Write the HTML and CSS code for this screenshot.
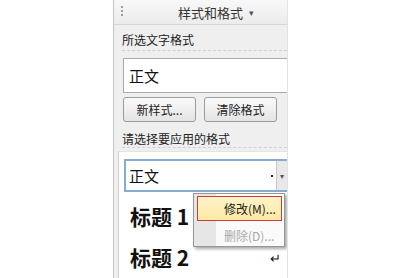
FILE: index.html
```html
<!DOCTYPE html>
<html lang="zh-CN">
<head>
    <meta charset="UTF-8">
    <title>样式和格式</title>
    <link rel="stylesheet" href="styles.css">
</head>
<body>
    <div class="page">
        <div class="gap"></div>
        <div class="panel">
            <div class="title">
                <span class="grip"></span>
                <span class="title-text">样式和格式</span>
                <span class="title-arrow">▾</span>
            </div>
            <div class="label">所选文字格式</div>
            <div class="rule"></div>
            <div class="current">正文</div>
            <div class="buttons">
                <button class="btn">新样式...</button>
                <button class="btn">清除格式</button>
            </div>
            <div class="label label-2">请选择要应用的格式</div>
            <div class="rule"></div>
            <div class="list">
                <div class="combo">
                    <span class="combo-text">正文</span>
                    <span class="combo-dot"></span>
                    <span class="combo-btn">▾</span>
                </div>
                <div class="style-item h1">标题 1</div>
                <div class="style-item h2">标题 2<span class="ret">↵</span></div>

                <div class="menu">
                    <div class="menu-item active">修改(M)...</div>
                    <div class="menu-item disabled">删除(D)...</div>
                </div>
            </div>
        </div>
    </div>
</body>
</html>
```

FILE: styles.css
```css
body {
    margin: 0;
    background: #fff;
    font-family: "Noto Sans CJK SC", "Noto Sans", sans-serif;
}

.page {
    display: flex;
    width: 400px;
    height: 278px;
    overflow: hidden;
}

.gap {
    width: 113px;
    flex: none;
}

.panel {
    width: 173px;
    flex: none;
    background: #efefef;
    border-left: 1px solid #c4c4c4;
    border-right: 1px solid #e2e2e2;
    overflow: hidden;
    position: relative;
}

.title {
    height: 25px;
    display: flex;
    align-items: center;
    background: linear-gradient(#f8f8f8, #ececec);
    border-bottom: 1px solid #d6d6d6;
    box-sizing: border-box;
    font-size: 13px;
    color: #333;
}

.grip {
    width: 2px;
    height: 12px;
    margin-left: 7px;
    background: repeating-linear-gradient(#9a9a9a 0 2px, transparent 2px 4px);
}

.title-text {
    margin-left: 55px;
}

.title-arrow {
    margin-left: 6px;
    font-size: 9px;
    color: #555;
}

.label {
    font-size: 12px;
    color: #222;
    padding: 7px 0 0 8px;
    height: 16px;
    line-height: 16px;
}

.label-2 {
    padding-top: 9px;
    height: 14px;
}

.rule {
    margin: 2px 0 0 8px;
    border-top: 1px dashed #cfcfcf;
}

.current {
    margin: 7px 0 0 9px;
    width: 180px;
    height: 33px;
    line-height: 33px;
    background: #fff;
    border: 1px solid #ababab;
    padding-left: 5px;
    font-size: 15px;
    color: #111;
}

.buttons {
    display: flex;
    gap: 8px;
    margin: 4px 0 0 9px;
}

.btn {
    width: 73px;
    height: 25px;
    padding: 0;
    font-family: inherit;
    font-size: 12px;
    color: #222;
    background: linear-gradient(#fafafa, #e4e4e4);
    border: 1px solid #9c9c9c;
    border-radius: 3px;
}

.list {
    margin: 3px 0 0 4px;
    height: 130px;
    background: #fff;
    border-left: 1px solid #cfcfcf;
    border-top: 1px solid #e4e4e4;
    position: relative;
}

.combo {
    margin: 7px 0 0 5px;
    height: 29px;
    border: 2px solid #86acd3;
    border-right: none;
    display: flex;
    align-items: center;
    font-size: 15px;
    color: #111;
}

.combo-text {
    padding-left: 3px;
    flex: 1;
}

.combo-dot {
    width: 2px;
    height: 2px;
    background: #222;
    margin-right: 3px;
}

.combo-btn {
    width: 10px;
    height: 29px;
    line-height: 29px;
    background: #e8e8e8;
    border-left: 1px solid #c8c8c8;
    font-size: 8px;
    color: #555;
    text-align: center;
}

.style-item {
    padding-left: 11px;
    font-weight: bold;
    font-size: 21px;
    color: #111;
    height: 41px;
    line-height: 41px;
    position: relative;
}

.h1 {
    margin-top: 4px;
}

.ret {
    position: absolute;
    right: 6px;
    top: 0;
    font-size: 13px;
    font-weight: normal;
}

.menu {
    position: absolute;
    left: 74px;
    top: 41px;
    width: 92px;
    height: 54px;
    background: linear-gradient(90deg, #e6e6e6 0 22px, #fafafa 22px);
    border: 1px solid #979797;
    box-shadow: 2px 2px 3px rgba(0, 0, 0, 0.35);
    box-sizing: border-box;
    padding: 2px 2px 0 3px;
}

.menu-item {
    height: 25px;
    line-height: 25px;
    font-size: 12px;
    padding-left: 27px;
    color: #222;
    box-sizing: border-box;
}

.menu-item.active {
    background: linear-gradient(#fff3c8, #fde9a4);
    border: 1px solid #d23a3a;
    line-height: 23px;
    padding-left: 26px;
}

.menu-item.disabled {
    color: #a8a8a8;
    margin-top: 2px;
}
```
